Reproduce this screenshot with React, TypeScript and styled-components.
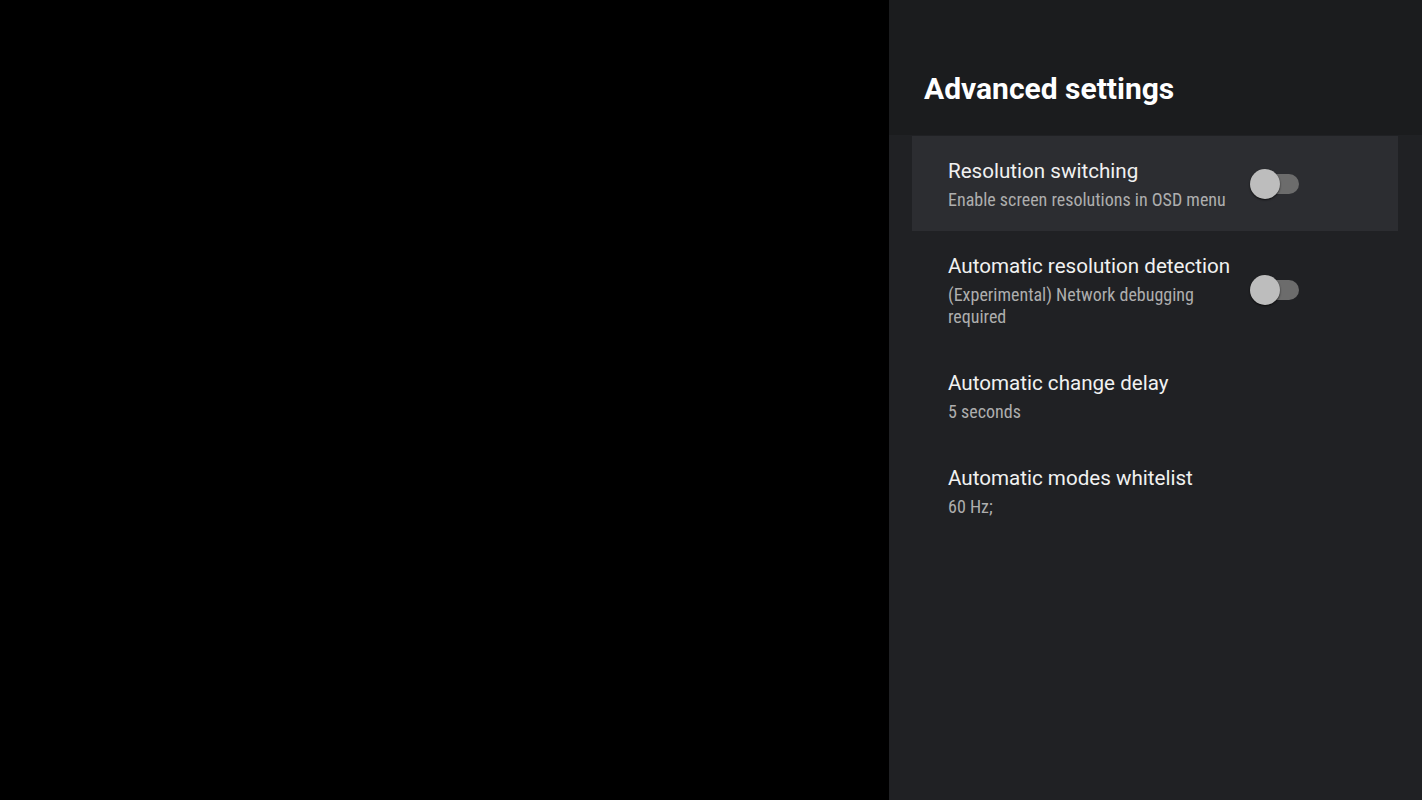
import styled, {createGlobalStyle} from "styled-components";

const GlobalStyle = createGlobalStyle`
  html, body {
    margin: 0;
    padding: 0;
    background: #000;
    font-family: Roboto, "Noto Sans", sans-serif;
  }
`

interface SettingProps {
  title: string
  summary: string
  toggle?: boolean
  focused?: boolean
}

const settings: SettingProps[] = [
  {title: 'Resolution switching', summary: 'Enable screen resolutions in OSD menu', toggle: true, focused: true},
  {title: 'Automatic resolution detection', summary: '(Experimental) Network debugging required', toggle: true},
  {title: 'Automatic change delay', summary: '5 seconds'},
  {title: 'Automatic modes whitelist', summary: '60 Hz;'},
]

const App = () => {
  return (
    <>
      <GlobalStyle/>
      <Screen>
        <Backdrop/>
        <Panel>
          <Header>
            <Title>Advanced settings</Title>
          </Header>
          <List>
            {settings.map(item => (
              <Row key={item.title} $focused={!!item.focused}>
                <Texts>
                  <RowTitle>{item.title}</RowTitle>
                  <Summary>{item.summary}</Summary>
                </Texts>
                {item.toggle && (
                  <Switch>
                    <Track/>
                    <Thumb/>
                  </Switch>
                )}
              </Row>
            ))}
          </List>
        </Panel>
      </Screen>
    </>
  )
}

export default App

const Screen = styled.div`
  display: flex;
  width: 100vw;
  height: 100vh;
  overflow: hidden;
`

const Backdrop = styled.div`
  flex: 1;
  background: #000;
`

const Panel = styled.div`
  width: 533px;
  display: flex;
  flex-direction: column;
  background: #202124;
`

const Header = styled.div`
  height: 135px;
  box-sizing: border-box;
  padding: 71px 35px 0;
  background: #1b1c1e;
`

const Title = styled.h1`
  margin: 0;
  font-size: 30px;
  line-height: 36px;
  font-weight: 700;
  color: #fff;
`

const List = styled.div`
  display: flex;
  flex-direction: column;
  padding: 1px 24px 0 23px;
`

const Row = styled.div<{ $focused: boolean }>`
  display: flex;
  align-items: center;
  padding: 23px 98px 20.5px 36px;
  background: ${({$focused}) => $focused ? '#2c2d31' : 'transparent'};
`

const Texts = styled.div`
  flex: 1;
  min-width: 0;
`

const RowTitle = styled.div`
  font-size: 20.6px;
  line-height: 24px;
  color: #f1f1f1;
`

const Summary = styled.div`
  margin-top: 6px;
  font-family: "Roboto Condensed", Roboto, sans-serif;
  font-stretch: condensed;
  font-size: 18px;
  line-height: 21.5px;
  color: #aeaeae;
`

const Switch = styled.div`
  position: relative;
  width: 50px;
  height: 32px;
  margin-left: 12px;
  flex-shrink: 0;
`

const Track = styled.div`
  position: absolute;
  left: 6px;
  right: 1px;
  top: 5px;
  height: 20px;
  border-radius: 10px;
  background: #6c6c6c;
`

const Thumb = styled.div`
  position: absolute;
  left: 0;
  top: 0;
  width: 30px;
  height: 30px;
  border-radius: 50%;
  background: #bdbdbd;
  box-shadow: 0 1px 2px rgba(0, 0, 0, 0.7);
`
